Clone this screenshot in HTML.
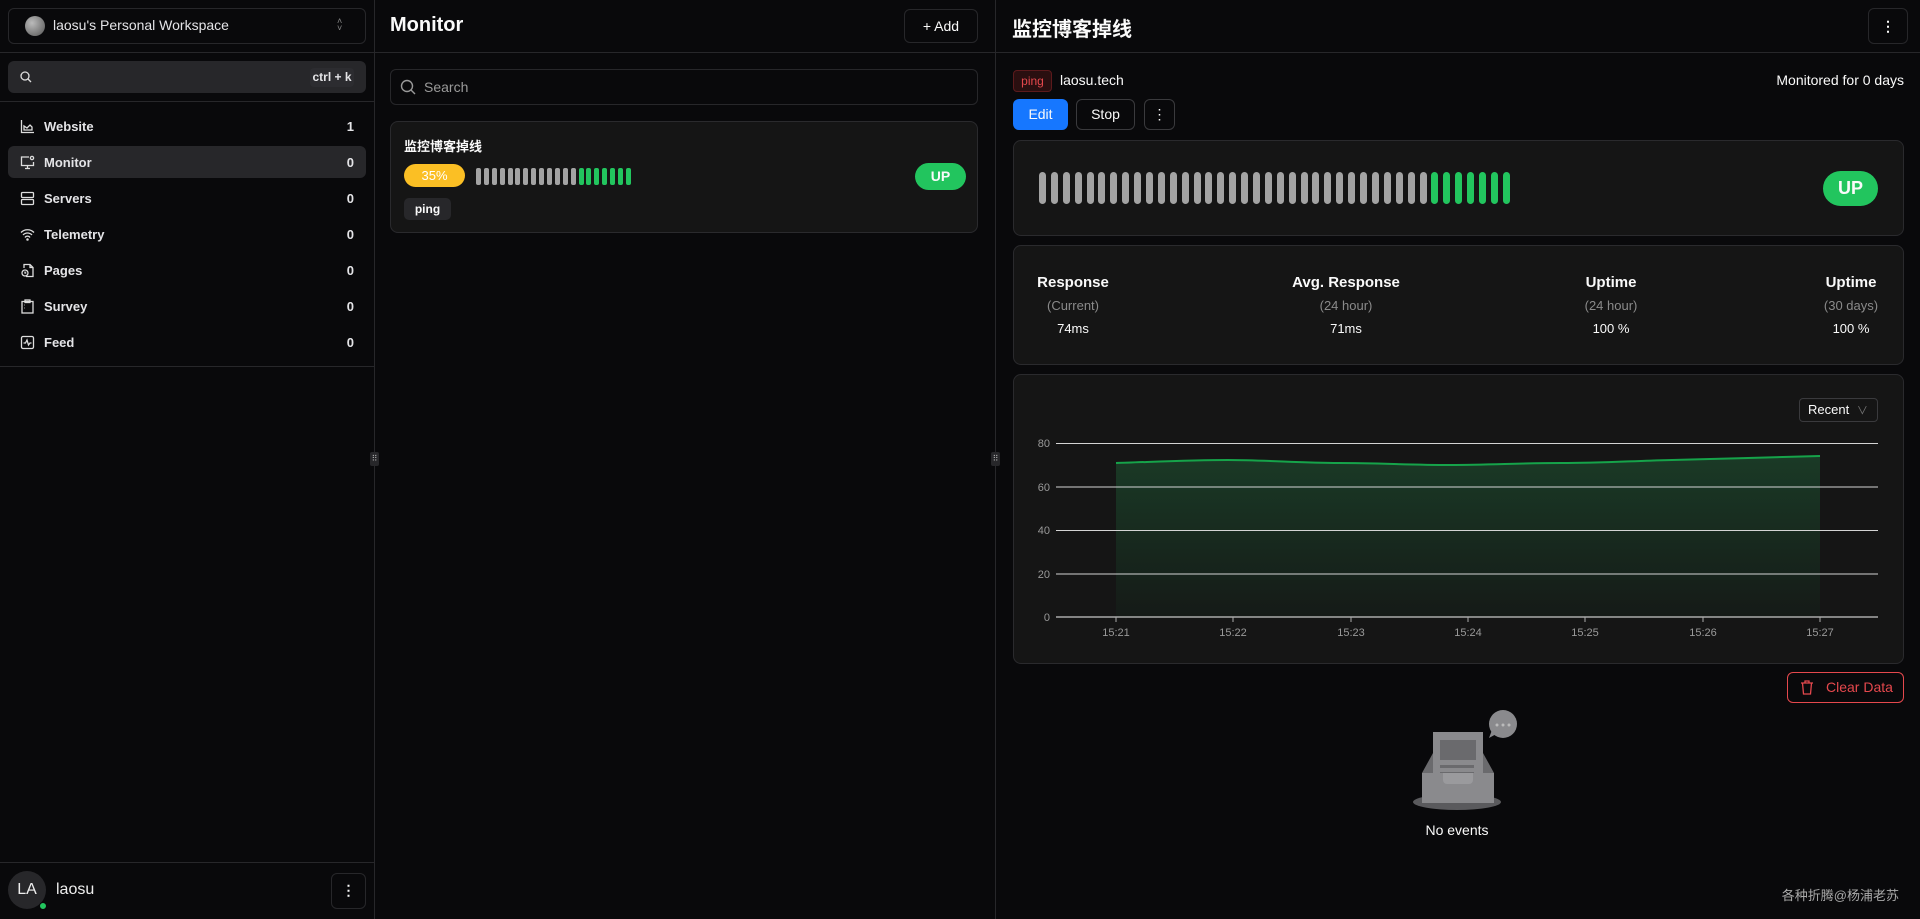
<!DOCTYPE html>
<html><head><meta charset="utf-8"><style>
*{box-sizing:border-box;margin:0;padding:0}
body{width:1920px;height:919px;background:#09090b;color:#fafafa;font-family:"Liberation Sans","Noto Sans CJK SC",sans-serif;position:relative;overflow:hidden;font-size:13px}
.a{position:absolute}
.bd{border:1px solid #27272a}
.hl{position:absolute;height:1px;background:#27272a}
.vl{position:absolute;width:1px;background:#27272a;top:0;height:919px}
.nav{position:absolute;left:8px;width:358px;height:32px;border-radius:6px;display:flex;align-items:center;font-size:13px;font-weight:bold;color:#e4e4e7}
.nav svg{margin-left:12px;margin-right:9px}
.nav .n{position:absolute;right:12px}
.card{position:absolute;background:#151515;border:1px solid #2a2a2d;border-radius:8px}
.bar{display:inline-block;border-radius:3px;vertical-align:top}
.center{text-align:center}
</style></head><body>
<!-- sidebar -->
<div class="vl" style="left:374px"></div>
<div class="vl" style="left:995px"></div>
<div class="a bd" style="left:8px;top:8px;width:358px;height:36px;border-radius:6px"></div>
<div class="a" style="left:25px;top:16px;width:20px;height:20px;border-radius:50%;background:radial-gradient(circle at 35% 35%,#bbb,#555)"></div>
<div class="a" style="left:53px;top:17px;font-size:14px;color:#e4e4e7">laosu's Personal Workspace</div>
<div class="a" style="left:337px;top:18px;font-size:9px;color:#888;line-height:7px">˄<br>˅</div>
<div class="hl" style="left:0;top:52px;width:374px"></div>
<div class="a" style="left:8px;top:61px;width:358px;height:32px;border-radius:6px;background:#27272a"></div>
<svg class="a" style="left:20px;top:71px" width="12" height="12" viewBox="0 0 12 12" fill="none" stroke="#ddd" stroke-width="1.3"><circle cx="5" cy="5" r="4"/><path d="M8 8l3 3"/></svg>
<div class="a" style="left:310px;top:68px;width:44px;height:19px;border-radius:4px;background:#2c2c30;font-size:12px;font-weight:bold;line-height:19px;text-align:center;color:#e4e4e7">ctrl + k</div>
<div class="hl" style="left:0;top:101px;width:374px"></div>

<div class="nav" style="top:110px"><svg width="15" height="15" viewBox="0 0 15 15" fill="none" stroke="#ddd" stroke-width="1.3"><path d="M1.5 1v12.5H14M4 11V7l3 2 3-3 2 2v3z"/></svg>Website<span class="n">1</span></div>
<div class="nav" style="top:146px;background:#27272a"><svg width="15" height="15" viewBox="0 0 15 15" fill="none" stroke="#ddd" stroke-width="1.3"><path d="M9 2H1.5v8.5H13.5V7M7.5 10.5v3M5 13.5h5"/><circle cx="12" cy="3" r="1.6"/></svg>Monitor<span class="n">0</span></div>
<div class="nav" style="top:182px"><svg width="15" height="15" viewBox="0 0 15 15" fill="none" stroke="#ddd" stroke-width="1.3"><rect x="1.5" y="1.5" width="12" height="5" rx="1"/><rect x="1.5" y="8.5" width="12" height="5" rx="1"/></svg>Servers<span class="n">0</span></div>
<div class="nav" style="top:218px"><svg width="15" height="15" viewBox="0 0 15 15" fill="none" stroke="#ddd" stroke-width="1.3"><path d="M1 5.5a9 9 0 0 1 13 0M3 8a6 6 0 0 1 9 0M5 10.5a3 3 0 0 1 5 0"/><circle cx="7.5" cy="12.5" r=".6"/></svg>Telemetry<span class="n">0</span></div>
<div class="nav" style="top:254px"><svg width="15" height="15" viewBox="0 0 15 15" fill="none" stroke="#ddd" stroke-width="1.3"><path d="M4 5V1.5h6l3 3v9H6M10 1.5v3h3"/><circle cx="5" cy="10" r="3"/><path d="M5 8.5V10h1.3"/></svg>Pages<span class="n">0</span></div>
<div class="nav" style="top:290px"><svg width="15" height="15" viewBox="0 0 15 15" fill="none" stroke="#ddd" stroke-width="1.3"><rect x="2" y="2.5" width="11" height="11.5"/><rect x="5" y="1" width="5" height="2.5"/><path d="M4.5 6h.5M4.5 9h.5"/></svg>Survey<span class="n">0</span></div>
<div class="nav" style="top:326px"><svg width="15" height="15" viewBox="0 0 15 15" fill="none" stroke="#ddd" stroke-width="1.3"><rect x="1.5" y="1.5" width="12" height="12" rx="1.5"/><path d="M3.5 8h2l1.5-3 1.5 5 1.5-2h1.5"/></svg>Feed<span class="n">0</span></div>
<div class="hl" style="left:0;top:366px;width:374px"></div>
<div class="hl" style="left:0;top:862px;width:374px"></div>
<div class="a" style="left:8px;top:871px;width:38px;height:38px;border-radius:50%;background:#27272a;font-size:16px;line-height:38px;text-align:center;color:#eee">LA</div>
<div class="a" style="left:39px;top:902px;width:8px;height:8px;border-radius:50%;background:#22c55e;border:1px solid #09090b"></div>
<div class="a" style="left:56px;top:881px;font-size:16px;color:#eee">laosu</div>
<div class="a bd" style="left:331px;top:873px;width:35px;height:36px;border-radius:6px;text-align:center;line-height:32px;font-size:14px;font-weight:bold">⋮</div>
<div class="a" style="left:370px;top:452px;width:9px;height:14px;border-radius:2px;background:#27272a;font-size:8px;color:#aaa;text-align:center;line-height:14px">⠿</div>
<div class="a" style="left:991px;top:452px;width:9px;height:14px;border-radius:2px;background:#27272a;font-size:8px;color:#aaa;text-align:center;line-height:14px">⠿</div>

<!-- middle -->
<div class="a" style="left:390px;top:14px;font-size:20px;font-weight:bold">Monitor</div>
<div class="a bd" style="left:904px;top:9px;width:74px;height:34px;border-radius:6px;font-size:14px;line-height:32px;text-align:center">+ Add</div>
<div class="hl" style="left:375px;top:52px;width:620px"></div>
<div class="a bd" style="left:390px;top:69px;width:588px;height:36px;border-radius:6px"></div>
<svg class="a" style="left:400px;top:79px" width="16" height="16" viewBox="0 0 16 16" fill="none" stroke="#999" stroke-width="1.4"><circle cx="7" cy="7" r="5.5"/><path d="M11 11l4 4"/></svg>
<div class="a" style="left:424px;top:79px;font-size:14px;color:#9a9a9a">Search</div>
<div class="card" style="left:390px;top:121px;width:588px;height:112px"></div>
<div class="a" style="left:404px;top:136px;font-size:13px;font-weight:bold">监控博客掉线</div>
<div class="a" style="left:404px;top:164px;width:61px;height:23px;border-radius:12px;background:#fbbf24;font-size:13px;line-height:23px;text-align:center;color:#fff">35%</div>
<div class="a" style="left:476px;top:168px;height:17px;white-space:nowrap;font-size:0" id="b1"></div>
<div class="a" style="left:915px;top:163px;width:51px;height:27px;border-radius:14px;background:#22c55e;font-size:14px;font-weight:bold;line-height:27px;text-align:center">UP</div>
<div class="a" style="left:404px;top:198px;width:47px;height:22px;border-radius:5px;background:#27272a;font-size:12px;font-weight:bold;line-height:22px;text-align:center">ping</div>

<!-- right -->
<div class="a" style="left:1012px;top:13px;font-size:20px;font-weight:bold">监控博客掉线</div>
<div class="a bd" style="left:1868px;top:8px;width:40px;height:36px;border-radius:6px;text-align:center;line-height:34px;font-size:14px;font-weight:bold">⋮</div>
<div class="hl" style="left:996px;top:52px;width:924px"></div>
<div class="a" style="left:1013px;top:70px;width:39px;height:22px;border-radius:4px;background:#2a0f10;border:1px solid #5c1a1c;color:#e5484d;font-size:12px;line-height:20px;text-align:center">ping</div>
<div class="a" style="left:1060px;top:72px;font-size:14px">laosu.tech</div>
<div class="a" style="right:16px;top:72px;font-size:14px">Monitored for 0 days</div>
<div class="a" style="left:1013px;top:99px;width:55px;height:31px;border-radius:6px;background:#1677ff;font-size:14px;line-height:31px;text-align:center">Edit</div>
<div class="a bd" style="left:1076px;top:99px;width:59px;height:31px;border-radius:6px;border-color:#3a3a3d;font-size:14px;line-height:29px;text-align:center">Stop</div>
<div class="a bd" style="left:1144px;top:99px;width:31px;height:31px;border-radius:6px;border-color:#3a3a3d;font-size:14px;line-height:29px;text-align:center">⋮</div>
<div class="card" style="left:1013px;top:140px;width:891px;height:96px"></div>
<div class="a" style="left:1039px;top:172px;height:32px;white-space:nowrap;font-size:0" id="b2"></div>
<div class="a" style="left:1823px;top:171px;width:55px;height:35px;border-radius:18px;background:#22c55e;font-size:18px;font-weight:bold;line-height:35px;text-align:center">UP</div>

<div class="card" style="left:1013px;top:245px;width:891px;height:120px"></div>
<div class="a center" style="left:1013px;top:273px;width:120px;font-size:15px;font-weight:bold;line-height:20px">Response<br><span style="font-size:13px;font-weight:normal;color:#8a8a8a;line-height:26px">(Current)</span><br><span style="font-size:13px;font-weight:normal;line-height:18px">74ms</span></div>
<div class="a center" style="left:1266px;top:273px;width:160px;font-size:15px;font-weight:bold;line-height:20px">Avg. Response<br><span style="font-size:13px;font-weight:normal;color:#8a8a8a;line-height:26px">(24 hour)</span><br><span style="font-size:13px;font-weight:normal;line-height:18px">71ms</span></div>
<div class="a center" style="left:1551px;top:273px;width:120px;font-size:15px;font-weight:bold;line-height:20px">Uptime<br><span style="font-size:13px;font-weight:normal;color:#8a8a8a;line-height:26px">(24 hour)</span><br><span style="font-size:13px;font-weight:normal;line-height:18px">100 %</span></div>
<div class="a center" style="left:1806px;top:273px;width:90px;font-size:15px;font-weight:bold;line-height:20px">Uptime<br><span style="font-size:13px;font-weight:normal;color:#8a8a8a;line-height:26px">(30 days)</span><br><span style="font-size:13px;font-weight:normal;line-height:18px">100 %</span></div>

<div class="card" style="left:1013px;top:374px;width:891px;height:290px"></div>
<div class="a" style="left:1799px;top:398px;width:79px;height:24px;border:1px solid #3a3a3d;border-radius:4px;font-size:13px;line-height:22px;padding-left:8px">Recent <span style="color:#777;font-size:11px;margin-left:4px">∨</span></div>
<svg class="a" style="left:0;top:0" width="1920" height="919">
<defs><linearGradient id="g" x1="0" y1="0" x2="0" y2="1"><stop offset="0" stop-color="#1a3a26"/><stop offset="1" stop-color="#151a17"/></linearGradient></defs>
<path d="M1116 463 C1150 462,1190 460,1228 460 S1300 463,1339 463 S1410 465,1450 465 S1520 463,1561 463 S1630 461,1672 460 S1780 457,1820 456 L1820 617 L1116 617Z" fill="url(#g)"/>
<g stroke="#d4d4d4" stroke-width="1"><path d="M1056 443.5H1878M1056 487H1878M1056 530.5H1878M1056 574H1878"/></g>
<path d="M1056 617H1878" stroke="#aaa" stroke-width="1.5"/>
<path d="M1116 463 C1150 462,1190 460,1228 460 S1300 463,1339 463 S1410 465,1450 465 S1520 463,1561 463 S1630 461,1672 460 S1780 457,1820 456" fill="none" stroke="#16a34a" stroke-width="2"/>
<g fill="#999" font-size="11" font-family="Liberation Sans" text-anchor="end"><text x="1050" y="447">80</text><text x="1050" y="491">60</text><text x="1050" y="534">40</text><text x="1050" y="578">20</text><text x="1050" y="621">0</text></g>
<g fill="#999" font-size="11" font-family="Liberation Sans" text-anchor="middle" stroke="none">
<text x="1116" y="636">15:21</text><text x="1233" y="636">15:22</text><text x="1351" y="636">15:23</text><text x="1468" y="636">15:24</text><text x="1585" y="636">15:25</text><text x="1703" y="636">15:26</text><text x="1820" y="636">15:27</text></g>
<g stroke="#aaa"><path d="M1116 617v5M1233 617v5M1351 617v5M1468 617v5M1585 617v5M1703 617v5M1820 617v5"/></g>
<!-- empty illustration -->
<ellipse cx="1457" cy="802" rx="44" ry="8" fill="#5a5a5d"/>
<rect x="1433" y="732" width="50" height="52" fill="#8a8a8d"/>
<rect x="1440" y="740" width="36" height="20" fill="#6a6a6d"/>
<rect x="1440" y="765" width="34" height="3" fill="#6a6a6d"/><rect x="1440" y="772" width="34" height="3" fill="#6a6a6d"/>
<path d="M1422 773l11-20v22zM1494 773l-11-20v22z" fill="#6a6a6d"/>
<rect x="1422" y="773" width="72" height="30" fill="#8a8a8d"/>
<path d="M1443 773h30v7a4 4 0 0 1-4 4h-22a4 4 0 0 1-4-4z" fill="#9a9a9d"/>
<circle cx="1503" cy="724" r="14" fill="#8a8a8d"/><path d="M1492 730l-3 8 9-5z" fill="#8a8a8d"/>
<g fill="#bbb"><circle cx="1497" cy="725" r="1.5"/><circle cx="1503" cy="725" r="1.5"/><circle cx="1509" cy="725" r="1.5"/></g>
</svg>
<div class="a" style="left:1787px;top:672px;width:117px;height:31px;border:1px solid #e5484d;border-radius:6px;color:#e5484d;font-size:14px;line-height:29px;padding-left:38px">Clear Data</div>
<svg class="a" style="left:1800px;top:680px" width="14" height="15" viewBox="0 0 14 15" fill="none" stroke="#e5484d" stroke-width="1.3"><path d="M1 3h12M5 3V1h4v2M2.5 3l1 11h7l1-11"/></svg>
<div class="a center" style="left:1407px;top:822px;width:100px;font-size:14px">No events</div>
<div class="a" style="right:21px;top:885px;font-size:13px;color:#aaa">各种折腾@杨浦老苏</div>
<script>
function bars(id,n,g,w,gap,h,r){var e=document.getElementById(id),s='';for(var i=0;i<n+g;i++){s+='<span class="bar" style="width:'+w+'px;height:'+h+'px;margin-right:'+gap+'px;border-radius:'+r+'px;background:'+(i<n?'#a3a3a3':'#22c55e')+'"></span>';}e.innerHTML=s;}
bars('b1',13,7,5,2.9,17,2);
bars('b2',33,7,7,4.9,32,4);
</script>
</body></html>
